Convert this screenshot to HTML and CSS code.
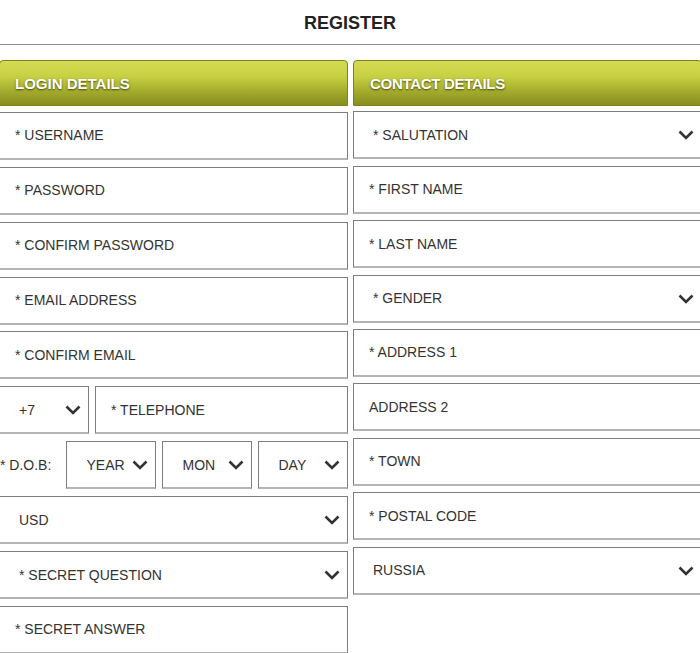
FILE: index.html
```html
<!DOCTYPE html>
<html lang="en">
  <head>
    <meta charset="UTF-8" />
    <meta name="viewport" content="width=device-width, initial-scale=1.0" />
    <title>Register</title>

    <link rel="stylesheet" href="styles.css">
  </head>
  <body>
    <h1 class="title">REGISTER</h1>
    <hr class="rule" />

    <form class="register">
      <!-- Login details -->
      <section class="col">
        <h2 class="panel-head">LOGIN DETAILS</h2>
        <input class="field" type="text" placeholder="* USERNAME" />
        <input class="field" type="password" placeholder="* PASSWORD" />
        <input class="field" type="password" placeholder="* CONFIRM PASSWORD" />
        <input class="field" type="email" placeholder="* EMAIL ADDRESS" />
        <input class="field" type="email" placeholder="* CONFIRM EMAIL" />

        <div class="phone-row">
          <label class="pick code">
            <select><option>+7</option></select>
            <svg class="chev" width="16" height="10" viewBox="0 0 16 10"><polyline points="1.5,1.5 8,8 14.5,1.5" /></svg>
          </label>
          <input class="field" type="tel" placeholder="* TELEPHONE" />
        </div>

        <div class="dob-row">
          <span class="dob-label">* D.O.B:</span>
          <label class="pick">
            <select><option>YEAR</option></select>
            <svg class="chev" width="16" height="10" viewBox="0 0 16 10"><polyline points="1.5,1.5 8,8 14.5,1.5" /></svg>
          </label>
          <label class="pick">
            <select><option>MON</option></select>
            <svg class="chev" width="16" height="10" viewBox="0 0 16 10"><polyline points="1.5,1.5 8,8 14.5,1.5" /></svg>
          </label>
          <label class="pick">
            <select><option>DAY</option></select>
            <svg class="chev" width="16" height="10" viewBox="0 0 16 10"><polyline points="1.5,1.5 8,8 14.5,1.5" /></svg>
          </label>
        </div>

        <label class="pick">
          <select><option>USD</option></select>
          <svg class="chev" width="16" height="10" viewBox="0 0 16 10"><polyline points="1.5,1.5 8,8 14.5,1.5" /></svg>
        </label>
        <label class="pick">
          <select><option>* SECRET QUESTION</option></select>
          <svg class="chev" width="16" height="10" viewBox="0 0 16 10"><polyline points="1.5,1.5 8,8 14.5,1.5" /></svg>
        </label>
        <input class="field" type="text" placeholder="* SECRET ANSWER" />
      </section>

      <!-- Contact details -->
      <section class="col contact">
        <h2 class="panel-head">CONTACT DETAILS</h2>
        <label class="pick">
          <select><option>* SALUTATION</option></select>
          <svg class="chev" width="16" height="10" viewBox="0 0 16 10"><polyline points="1.5,1.5 8,8 14.5,1.5" /></svg>
        </label>
        <input class="field" type="text" placeholder="* FIRST NAME" />
        <input class="field" type="text" placeholder="* LAST NAME" />
        <label class="pick">
          <select><option>* GENDER</option></select>
          <svg class="chev" width="16" height="10" viewBox="0 0 16 10"><polyline points="1.5,1.5 8,8 14.5,1.5" /></svg>
        </label>
        <input class="field" type="text" placeholder="* ADDRESS 1" />
        <input class="field" type="text" placeholder="ADDRESS 2" />
        <input class="field" type="text" placeholder="* TOWN" />
        <input class="field" type="text" placeholder="* POSTAL CODE" />
        <label class="pick">
          <select><option>RUSSIA</option></select>
          <svg class="chev" width="16" height="10" viewBox="0 0 16 10"><polyline points="1.5,1.5 8,8 14.5,1.5" /></svg>
        </label>
      </section>
    </form>
  </body>
</html>
```

FILE: styles.css
```css
* {
  font-family: 'Liberation Sans', Arial, sans-serif;
  box-sizing: border-box;
}

body {
  margin: 0;
  overflow: hidden;
  background: #fff;
  color: #333;
}

.title {
  margin: 12px 0 0;
  font-size: 18px;
  line-height: 22px;
  text-align: center;
  color: #222;
}

.rule {
  margin: 10px 0 0;
  border: 0;
  border-top: 1px solid #8c8c8c;
}

/* Columns */
.register {
  display: grid;
  grid-template-columns: 349px 349px;
  align-items: start;
  gap: 5px;
  margin: 15px 0 0 -1px;
}

.col {
  display: flex;
  flex-direction: column;
  gap: 6.9px;
}
.col.contact {
  gap: 6.4px;
}

.panel-head {
  margin: 0;
  height: 46px;
  padding-left: 15px;
  display: flex;
  align-items: center;

  font-size: 15px;
  color: #fff;
  text-shadow: 0 1px 2px rgba(40, 40, 0, 0.8);

  background: linear-gradient(#d4db52 0%, #c8d042 35%, #a2aa2d 70%, #878e1f 100%);
  border: 1px solid #7b821f;
  border-radius: 4px 4px 0 0;
}
.col .panel-head {
  margin-bottom: -1px;
}
.contact .panel-head {
  padding-left: 16px;
  letter-spacing: -0.3px;
}

/* Inputs */
.field,
.pick select {
  width: 100%;
  height: 48px;
  margin: 0;
  padding: 0 0 0 15px;
  font-size: 14px;
  color: #333;
  background: #fff;
  border: 1px solid #7d7d7d;
  border-bottom: 2px solid #b4b4b4;
  border-radius: 0;
  outline: none;
}
.field::placeholder {
  color: #333;
  opacity: 1;
}

.pick {
  position: relative;
  display: block;
}
.pick select {
  appearance: none;
  -webkit-appearance: none;
  padding-left: 19px;
}

.chev {
  position: absolute;
  right: 8px;
  top: 19px;
  pointer-events: none;
}
.chev polyline {
  fill: none;
  stroke: #333;
  stroke-width: 2.6;
}

/* Telephone */
.phone-row {
  display: flex;
  gap: 6px;
}
.phone-row .code {
  flex: 0 0 90px;
}
.phone-row .field {
  flex: 1;
}

/* Date of birth */
.dob-row {
  display: flex;
  align-items: center;
  gap: 5.5px;
}
.dob-row .pick {
  flex: 1;
}
.dob-label {
  flex: 0 0 61px;
  padding-left: 1px;
  font-size: 14px;
  color: #333;
}
.dob-row .pick select {
  padding-left: 20px;
}
```
